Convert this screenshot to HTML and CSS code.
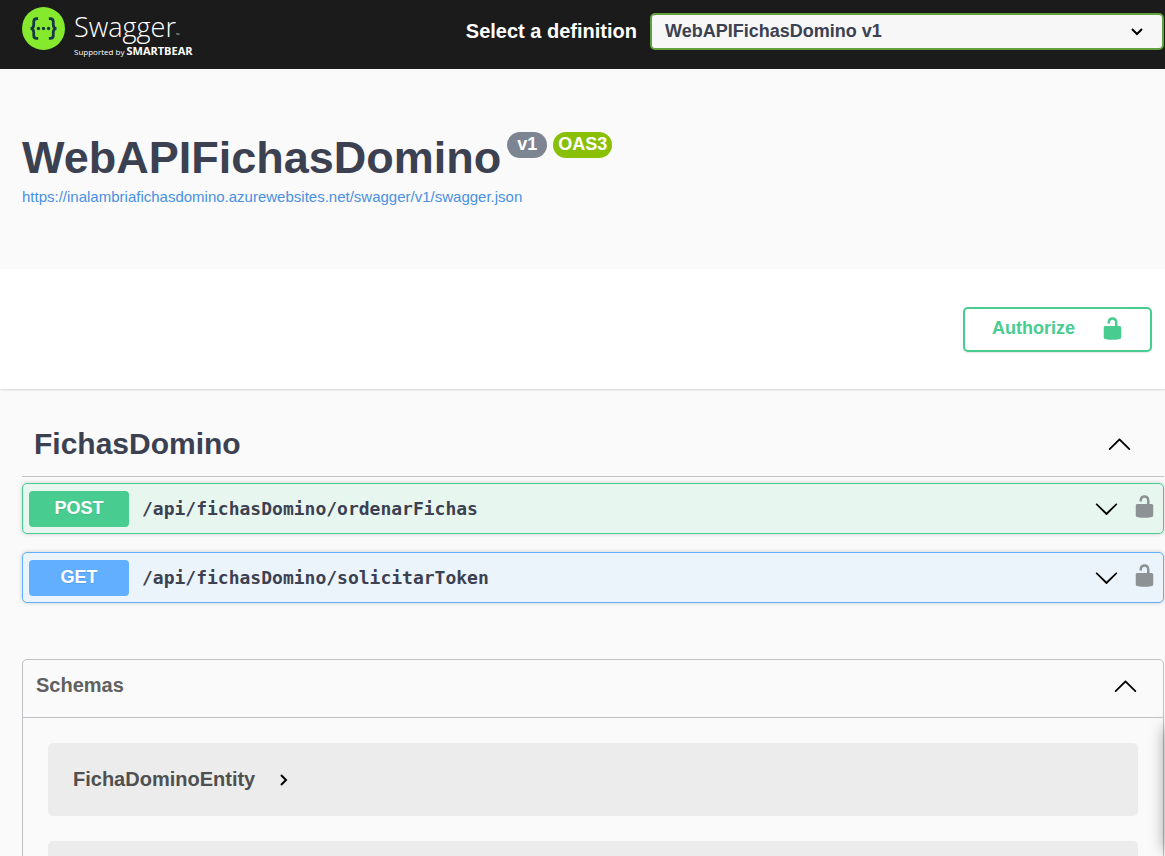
FILE: index.html
```html
<!DOCTYPE html>
<html lang="en">
<head>
<meta charset="utf-8">
<meta name="viewport" content="width=device-width, initial-scale=1">
<title>Swagger UI</title>
<link rel="stylesheet" href="styles.css">
</head>
<body>
<svg class="sprite" aria-hidden="true">
  <symbol id="unlocked" viewBox="0 0 20 20"><path d="M15.8 8H14V5.6C14 2.703 12.665 1 10 1 7.334 1 6 2.703 6 5.6V6h2v-.801C8 3.754 8.797 3 10 3c1.203 0 2 .754 2 2.199V8H4c-.553 0-1 .646-1 1.199V17c0 .549.428 1.139.951 1.307l1.197.387C5.672 18.861 6.55 19 7.1 19h5.8c.549 0 1.428-.139 1.951-.307l1.196-.387c.524-.167.953-.757.953-1.306V9.199C17 8.646 16.352 8 15.8 8z"/></symbol>
  <symbol id="arrow-down" viewBox="0 0 20 20"><path d="M17.418 6.109c.272-.268.709-.268.979 0s.271.701 0 .969l-7.908 7.83c-.27.268-.707.268-.979 0l-7.908-7.83c-.27-.268-.27-.701 0-.969.271-.268.709-.268.979 0L10 13.25l7.418-7.141z"/></symbol>
  <symbol id="arrow-up" viewBox="0 0 20 20"><path d="M17.418 14.908c.272.27.709.27.979 0s.271-.701 0-.969l-7.908-7.83c-.27-.268-.707-.268-.979 0l-7.908 7.83c-.27.268-.27.701 0 .969.271.27.709.27.979 0L10 7.767l7.418 7.141z"/></symbol>
</svg>

<header class="topbar">
  <a class="logo" href="#" aria-label="Swagger, supported by SmartBear">
    <svg class="logo-mark" viewBox="0 0 44 44" aria-hidden="true">
      <circle cx="22" cy="22" r="22" fill="#85ea2d"/>
      <g fill="none" stroke="#173647" stroke-width="2.800">
        <path d="M16.500 11.800h-1.300c-2.300 0-3.200 1-3.200 3v3.400c0 2.300-.8 3.600-3.200 3.800 2.400.2 3.200 1.500 3.200 3.800v3.400c0 2 .9 3 3.200 3h1.300"/>
        <path d="M27.500 11.800h1.300c2.300 0 3.200 1 3.200 3v3.400c0 2.300.8 3.600 3.200 3.800-2.400.2-3.200 1.500-3.200 3.800v3.400c0 2-.9 3-3.200 3h-1.300"/>
      </g>
      <g fill="#173647"><circle cx="16.800" cy="22" r="1.700"/><circle cx="22" cy="22" r="1.700"/><circle cx="27.200" cy="22" r="1.700"/></g>
    </svg>
    <span class="logo-text">
      <span class="logo-name">Swagger<span class="logo-tm">™</span></span>
      <span class="logo-tag">Supported by <b>SMARTBEAR</b></span>
    </span>
  </a>
  <form class="definition">
    <label for="definition">Select a definition</label>
    <span class="select-box">
      <select id="definition"><option>WebAPIFichasDomino v1</option></select>
      <svg class="select-arrow" viewBox="0 0 12 8" aria-hidden="true"><path d="M1 1l5 5 5-5" fill="none" stroke="#000" stroke-width="2"/></svg>
    </span>
  </form>
</header>

<section class="info">
  <div class="title-row">
    <h1>WebAPIFichasDomino</h1>
    <span class="badge">v1</span>
    <span class="badge badge-oas">OAS3</span>
  </div>
  <a class="spec-link" href="#">https://inalambriafichasdomino.azurewebsites.net/swagger/v1/swagger.json</a>
</section>

<section class="scheme">
  <button class="authorize" type="button">Authorize <svg class="lock"><use href="#unlocked"/></svg></button>
</section>

<main class="content">
  <section>
    <div class="tag-header">
      <h2>FichasDomino</h2>
      <button class="icon-button" type="button" aria-label="Collapse FichasDomino"><svg class="arrow"><use href="#arrow-up"/></svg></button>
    </div>
    <div class="operations">
      <div class="operation post">
        <span class="method">POST</span>
        <span class="path">/api/fichasDomino/ordenarFichas</span>
        <button class="icon-button" type="button" aria-label="Expand operation"><svg class="arrow"><use href="#arrow-down"/></svg></button>
        <button class="icon-button lock-button" type="button" aria-label="Authorization"><svg class="lock"><use href="#unlocked"/></svg></button>
      </div>
      <div class="operation get">
        <span class="method">GET</span>
        <span class="path">/api/fichasDomino/solicitarToken</span>
        <button class="icon-button" type="button" aria-label="Expand operation"><svg class="arrow"><use href="#arrow-down"/></svg></button>
        <button class="icon-button lock-button" type="button" aria-label="Authorization"><svg class="lock"><use href="#unlocked"/></svg></button>
      </div>
    </div>
  </section>

  <section class="models">
    <div class="models-header">
      <h3>Schemas</h3>
      <button class="icon-button" type="button" aria-label="Collapse schemas"><svg class="arrow"><use href="#arrow-up"/></svg></button>
    </div>
    <div class="models-list">
      <button class="model" type="button">FichaDominoEntity
        <svg class="model-arrow" viewBox="0 0 10 14" aria-hidden="true"><path d="M2 2l5 5-5 5" fill="none" stroke="#000" stroke-width="2"/></svg>
      </button>
      <div class="model"></div>
    </div>
  </section>
</main>
<div class="side-panel"></div>
</body>
</html>
```

FILE: styles.css
```css
* {
  box-sizing: border-box;
}

body {
  margin: 0;
  height: 100vh;
  overflow: hidden;
  background: #fafafa;
  color: #3b4151;
  font-family: "Liberation Sans", Arial, sans-serif;
}

h1, h2, h3 {
  margin: 0;
}

button {
  font: inherit;
  color: inherit;
  cursor: pointer;
}

.sprite {
  position: absolute;
  width: 0;
  height: 0;
}

.topbar {
  display: flex;
  align-items: flex-start;
  padding: 7px 1px 19px 22px;
  background: #1b1b1b;
}

.logo {
  display: flex;
  flex: 0 0 428px;
  gap: 9px;
  height: 43px;
  color: #fff;
  text-decoration: none;
  font-family: "Open Sans", sans-serif;
}

.logo-mark {
  width: 43px;
  height: 43px;
}

.logo-text {
  display: flex;
  flex-direction: column;
}

.logo-name {
  font-size: 27px;
  font-weight: 300;
  line-height: 40px;
}

.logo-tm {
  font-size: 5px;
  line-height: 5px;
}

.logo-tag {
  font-size: 8px;
  line-height: 8px;
  white-space: nowrap;
}

.logo-tag b {
  font-size: 11px;
  font-weight: 700;
}

.definition {
  display: flex;
  flex: 1;
  align-items: center;
  justify-content: flex-end;
  gap: 13px;
  padding-top: 6px;
}

.definition label {
  padding-bottom: 2px;
  color: #fff;
  font-size: 20px;
  font-weight: 700;
  line-height: 34px;
  white-space: nowrap;
}

.select-box {
  display: grid;
  flex: 0 1 514px;
  align-items: center;
}

.select-box select {
  grid-area: 1 / 1;
  width: 100%;
  height: 37px;
  padding: 0 40px 2px 13px;
  border: 2px solid #62a03f;
  border-radius: 5px;
  background: #f7f7f7;
  color: #3b4151;
  font: 700 18px "Liberation Sans", Arial, sans-serif;
  appearance: none;
}

.select-arrow {
  grid-area: 1 / 1;
  justify-self: end;
  width: 12px;
  height: 8px;
  margin-right: 21px;
  pointer-events: none;
}

.info {
  padding: 62px 22px 60px;
}

.title-row {
  display: flex;
  align-items: flex-start;
  gap: 6px;
}

h1 {
  font-size: 45px;
  line-height: 54px;
}

.badge {
  margin-top: 1px;
  padding: 0 10px 2px;
  border-radius: 13px;
  background: #7d8492;
  color: #fff;
  font-size: 18px;
  font-weight: 700;
  line-height: 24px;
}

.badge-oas {
  padding-right: 5px;
  padding-left: 5px;
  background: #89bf04;
}

.spec-link {
  display: block;
  padding: 6px 0;
  color: #4990e2;
  font-size: 15px;
  line-height: 12px;
  text-decoration: none;
}

.scheme {
  display: flex;
  justify-content: flex-end;
  padding: 38px 13px 37px;
  background: #fff;
  box-shadow: 0 1px 2px rgba(0, 0, 0, 0.15);
}

.authorize {
  display: flex;
  align-items: center;
  gap: 25px;
  height: 45px;
  padding: 0 25px 3px 27px;
  border: 2px solid #49cc90;
  border-radius: 5px;
  background: #fff;
  box-shadow: 0 1px 2px rgba(0, 0, 0, 0.1);
  color: #49cc90;
  font-size: 18px;
  font-weight: 700;
}

.lock {
  width: 25px;
  height: 25px;
  fill: currentColor;
}

.arrow {
  width: 25px;
  height: 25px;
}

.icon-button {
  display: flex;
  padding: 0;
  border: 0;
  background: none;
  color: #000;
}

.content {
  padding: 25px 1px 0 22px;
}

.tag-header {
  display: flex;
  align-items: center;
  justify-content: space-between;
  padding: 11px 32px 14px 12px;
  border-bottom: 1px solid #c0c1c4;
}

h2 {
  font-size: 30px;
  line-height: 37px;
}

.operations {
  display: grid;
  gap: 18px;
  padding-top: 6px;
}

.operation {
  display: flex;
  align-items: center;
  height: 51px;
  padding: 0 6px;
  border: 1px solid;
  border-radius: 5px;
  box-shadow: 0 0 4px rgba(0, 0, 0, 0.19);
}

.operation.post {
  border-color: #49cc90;
  background: #e8f6f0;
}

.operation.get {
  border-color: #61affe;
  background: #ebf3fb;
}

.method {
  width: 100px;
  padding-bottom: 2px;
  border-radius: 4px;
  color: #fff;
  font-size: 18px;
  font-weight: 700;
  line-height: 34px;
  text-align: center;
  text-shadow: 0 1px 0 rgba(0, 0, 0, 0.1);
}

.post .method {
  background: #49cc90;
}

.get .method {
  background: #61affe;
}

.path {
  flex: 1;
  padding-left: 13px;
  font: 700 18px "DejaVu Sans Mono", monospace;
}

.lock-button {
  margin-left: 13px;
  padding-bottom: 4px;
  color: #8d9395;
}

.models {
  margin-top: 56px;
  border: 1px solid #c0c1c4;
  border-radius: 5px;
}

.models-header {
  display: flex;
  align-items: center;
  justify-content: space-between;
  height: 58px;
  padding: 0 25px 6px 13px;
  border-bottom: 1px solid #c0c1c4;
  color: #606060;
}

h3 {
  font-size: 20px;
  line-height: 25px;
}

.models-list {
  display: grid;
  gap: 25px;
  padding: 25px;
}

.model {
  display: flex;
  align-items: center;
  gap: 24px;
  height: 73px;
  padding: 0 25px;
  border: 0;
  border-radius: 5px;
  background: #ececec;
  color: #505050;
  font-size: 20px;
  font-weight: 700;
}

.model-arrow {
  width: 10px;
  height: 14px;
}

/* Panel docked just outside the right edge; only its shadow shows. */
.side-panel {
  position: fixed;
  top: 728px;
  bottom: 6px;
  left: 100%;
  width: 40px;
  box-shadow: 0 0 16px rgba(0, 0, 0, 0.4);
}
```
